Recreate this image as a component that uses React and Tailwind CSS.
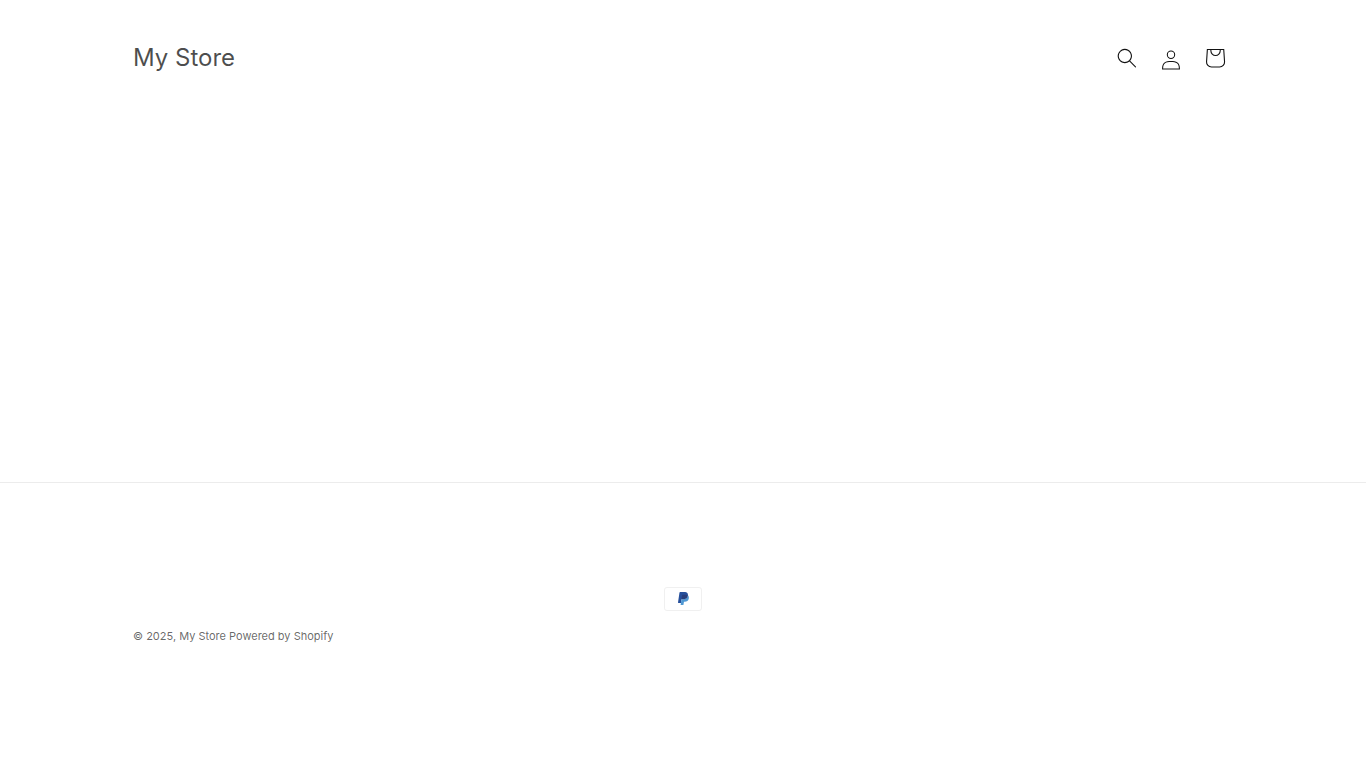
import React from 'react';

function SearchIcon() {
  return (
    <svg viewBox="0 0 18 19" className="size-5" fill="currentColor" aria-hidden="true">
      <path
        fillRule="evenodd"
        clipRule="evenodd"
        d="M11.03 11.68A5.784 5.784 0 112.85 3.5a5.784 5.784 0 018.18 8.18zm.26 1.12a6.78 6.78 0 11.72-.7l5.4 5.4a.5.5 0 11-.71.7l-5.41-5.4z"
      />
    </svg>
  );
}

function AccountIcon() {
  return (
    <svg viewBox="0 0 18 19" className="size-5" fill="currentColor" aria-hidden="true">
      <path
        fillRule="evenodd"
        clipRule="evenodd"
        d="M6 4.5a3 3 0 116 0 3 3 0 01-6 0zm3-4a4 4 0 100 8 4 4 0 000-8zm5.58 12.15c1.12.82 1.83 2.24 1.91 4.85H1.51c.08-2.6.79-4.03 1.9-4.85C4.66 11.75 6.5 11.5 9 11.5s4.35.26 5.58 1.15zM9 10.5c-2.5 0-4.65.24-6.17 1.35C1.27 12.98.5 14.93.5 18v.5h17V18c0-3.07-.77-5.02-2.33-6.15-1.52-1.1-3.67-1.35-6.17-1.35z"
      />
    </svg>
  );
}

function CartIcon() {
  return (
    <svg viewBox="0 0 40 40" className="size-11" fill="currentColor" aria-hidden="true">
      <path
        fillRule="evenodd"
        d="M15.75 11.8h-3.16l-.77 11.6a5 5 0 0 0 4.99 5.34h7.38a5 5 0 0 0 4.99-5.33L28.4 11.8zm0 1h-2.22l-.71 10.67a4 4 0 0 0 3.99 4.27h7.38a4 4 0 0 0 4-4.27l-.72-10.67h-2.22v.63a4.75 4.75 0 1 1-9.5 0zm8.5 0h-7.5v.63a3.75 3.75 0 1 0 7.5 0z"
      />
    </svg>
  );
}

function PayPalIcon() {
  return (
    <svg viewBox="0 0 38 24" width="38" height="24" role="img" aria-label="PayPal">
      <path opacity=".06" d="M35 0H3C1.3 0 0 1.3 0 3v18c0 1.7 1.4 3 3 3h32c1.7 0 3-1.3 3-3V3c0-1.7-1.4-3-3-3z" />
      <path fill="#fff" d="M35 1c1.1 0 2 .9 2 2v18c0 1.1-.9 2-2 2H3c-1.1 0-2-.9-2-2V3c0-1.1.9-2 2-2h32" />
      <path fill="#264f9b" d="M23.9 8.3c.2-1 0-1.7-.6-2.3-.6-.7-1.7-1-3.1-1h-4.1c-.3 0-.5.2-.6.5L14 15.6c0 .2.1.4.3.4H17l.4-3.4 1.8-2.2 4.7-2.1z" />
      <path fill="#4f98d3" d="M23.9 8.3l-.2.2c-.5 2.8-2.2 3.8-4.6 3.8H18c-.3 0-.5.2-.6.5l-.6 3.9-.2 1c0 .2.1.4.3.4H19c.3 0 .5-.2.5-.4v-.1l.4-2.4v-.1c0-.2.3-.4.5-.4h.3c2.1 0 3.7-.8 4.1-3.2.2-1 .1-1.8-.4-2.4-.1-.5-.3-.7-.5-.8z" />
      <path fill="#273e7c" d="M23.3 8.1c-.1-.1-.2-.1-.3-.1-.1 0-.2 0-.3-.1-.3-.1-.7-.1-1.1-.1h-3c-.1 0-.2 0-.2.1-.2.1-.3.2-.3.4l-.7 4.4v.1c0-.3.3-.5.6-.5h1.3c2.5 0 4.1-1 4.6-3.8v-.2c-.1-.1-.3-.2-.5-.2h-.1z" />
    </svg>
  );
}

function Header() {
  return (
    <header className="mx-auto flex w-full max-w-[1200px] items-center justify-between px-[50px] py-9">
      <a href="/" className="text-2xl text-[#121212]/75">My Store</a>
      <div className="-mr-1 flex items-center text-[#121212]">
        <button type="button" aria-label="Search" className="flex size-11 items-center justify-center">
          <SearchIcon />
        </button>
        <a href="/account" aria-label="Log in" className="flex size-11 items-center justify-center pt-1">
          <AccountIcon />
        </a>
        <a href="/cart" aria-label="Cart" className="flex size-11 items-center justify-center">
          <CartIcon />
        </a>
      </div>
    </header>
  );
}

function Footer() {
  return (
    <footer className="border-t border-[#121212]/8 pt-[104px] pb-[123px]">
      <div className="mx-auto flex max-w-[1200px] flex-col gap-4 px-[50px]">
        <ul className="flex justify-center">
          <li><PayPalIcon /></li>
        </ul>
        <p className="text-[11px] leading-[18px] text-[#121212]/65">
          © 2025, <a href="/">My Store</a> <a href="https://www.shopify.com">Powered by Shopify</a>
        </p>
      </div>
    </footer>
  );
}

export default function App() {
  return (
    <div className="flex min-h-screen flex-col bg-white font-['Inter',sans-serif]">
      <Header />
      <main className="flex-1" />
      <Footer />
    </div>
  );
}
